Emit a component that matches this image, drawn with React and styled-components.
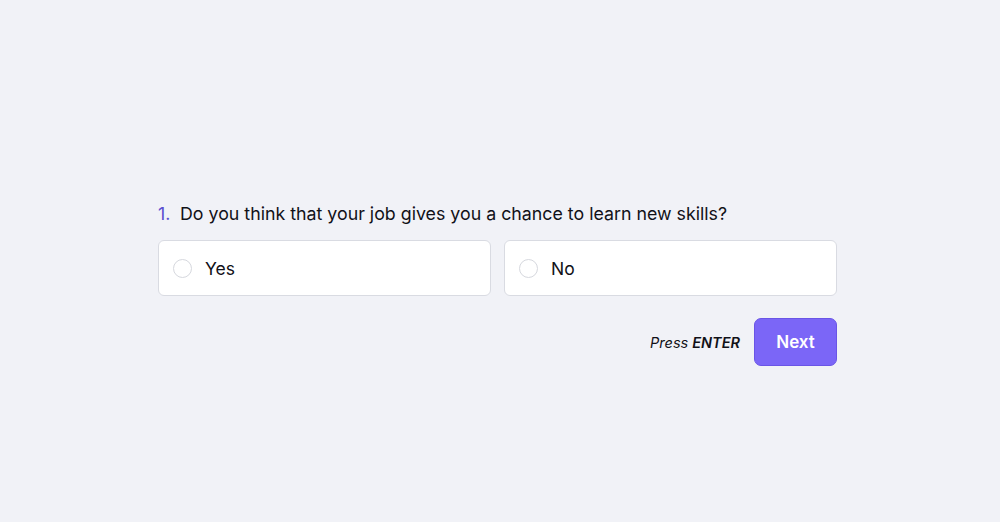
import React from 'react';
import styled, { createGlobalStyle } from 'styled-components';

const GlobalStyle = createGlobalStyle`
  html, body {
    margin: 0;
    padding: 0;
    background: #f1f2f7;
    font-family: Inter, "Noto Sans", sans-serif;
    color: #111118;
  }
`;

const Page = styled.main`
  min-height: 522px;
  box-sizing: border-box;
  padding: 202px 0 0 158px;
`;

const Form = styled.div`
  width: 679px;
`;

const Question = styled.h2`
  margin: 0 0 14px;
  display: flex;
  gap: 6px;
  font-size: 17.8px;
  font-weight: 400;
  line-height: 24px;
`;

const Number = styled.span`
  color: #5b4fd0;
  width: 16px;
`;

const Options = styled.div`
  display: grid;
  grid-template-columns: 1fr 1fr;
  gap: 13px;
`;

const Option = styled.label`
  display: flex;
  align-items: center;
  gap: 13px;
  height: 56px;
  box-sizing: border-box;
  padding: 0 14px;
  background: #fff;
  border: 1px solid #d9dbe2;
  border-radius: 6px;
  font-size: 17.5px;
  cursor: pointer;
`;

const Radio = styled.span`
  width: 19px;
  height: 19px;
  border-radius: 50%;
  border: 1px solid #d6d8de;
  box-sizing: border-box;
  background: #fff;
`;

const Footer = styled.div`
  display: flex;
  justify-content: flex-end;
  align-items: center;
  gap: 14px;
  margin-top: 22px;
`;

const Hint = styled.span`
  font-size: 14.5px;
  font-style: italic;
  b {
    font-weight: 600;
  }
`;

const NextButton = styled.button`
  width: 83px;
  height: 48px;
  border-radius: 7px;
  border: 1px solid #6a55e6;
  background: #7b66f7;
  color: #fff;
  font-family: inherit;
  font-size: 17px;
  font-weight: 600;
  cursor: pointer;
`;

const answers = ['Yes', 'No'];

export default function App() {
  return (
    <>
      <GlobalStyle />
      <Page>
        <Form>
          <Question>
            <Number>1.</Number>
            Do you think that your job gives you a chance to learn new skills?
          </Question>
          <Options>
            {answers.map((a) => (
              <Option key={a}>
                <Radio />
                {a}
              </Option>
            ))}
          </Options>
          <Footer>
            <Hint>
              Press <b>ENTER</b>
            </Hint>
            <NextButton>Next</NextButton>
          </Footer>
        </Form>
      </Page>
    </>
  );
}
